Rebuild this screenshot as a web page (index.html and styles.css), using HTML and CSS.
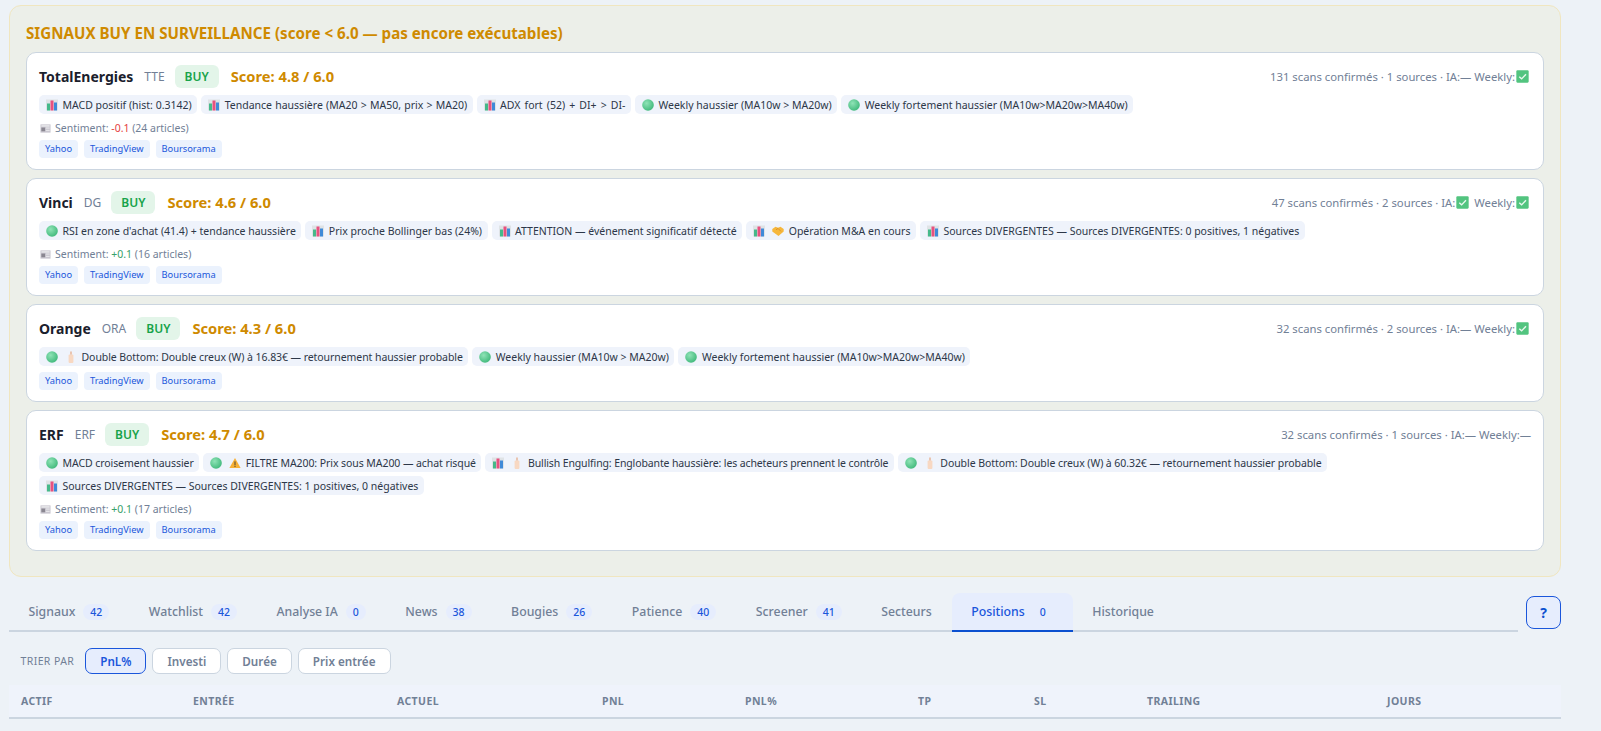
FILE: index.html
```html
<!DOCTYPE html>
<html lang="fr">
<head>
    <meta charset="UTF-8">
    <title>Positions</title>
    <link rel="stylesheet" href="styles.css">
</head>
<body>
    <svg class="sprite" width="0" height="0">
        <defs>
            <radialGradient id="ball-fill" cx="0.38" cy="0.35" r="0.7">
                <stop offset="0" stop-color="#8fe3b6"/>
                <stop offset="1" stop-color="#3fb87a"/>
            </radialGradient>
        </defs>
        <symbol id="chart" viewBox="0 0 12 12">
            <rect x="0" y="0.5" width="12" height="11" fill="#dfe3e6"/>
            <rect x="1" y="4.5" width="3" height="7" fill="#45b98a"/>
            <rect x="4.5" y="1.5" width="3" height="10" fill="#e8517f"/>
            <rect x="8" y="3.5" width="3" height="8" fill="#3f8ad8"/>
        </symbol>
        <symbol id="ball" viewBox="0 0 12 12">
            <circle cx="6" cy="6" r="5.8" fill="url(#ball-fill)"/>
        </symbol>
        <symbol id="candle" viewBox="0 0 12 12">
            <rect x="3.6" y="3.5" width="4.8" height="8.5" rx="1" fill="#f8d8c2"/>
            <rect x="5.4" y="0.5" width="1.2" height="3" fill="#e5a67e"/>
        </symbol>
        <symbol id="warn" viewBox="0 0 12 12">
            <path d="M6 1 11.6 11H.4z" fill="#f7b035"/>
            <rect x="5.4" y="4.4" width="1.2" height="3.8" fill="#6b5630"/>
            <rect x="5.4" y="8.8" width="1.2" height="1.2" fill="#6b5630"/>
        </symbol>
        <symbol id="news" viewBox="0 0 12 12">
            <rect x="0.5" y="1.5" width="11" height="9" fill="#c9c6cf"/>
            <rect x="1.5" y="2.5" width="9" height="1.4" fill="#eeeef0"/>
            <rect x="1.5" y="5" width="4" height="4" fill="#8a8791"/>
            <rect x="6.5" y="5" width="4" height="1" fill="#eeeef0"/>
            <rect x="6.5" y="7.5" width="4" height="1" fill="#eeeef0"/>
        </symbol>
        <symbol id="check" viewBox="0 0 12 12">
            <rect x="0.3" y="0.3" width="11.4" height="11.4" rx="1" fill="#52c47f"/>
            <path d="M3 6.2 5.2 8.2 9.2 4" fill="none" stroke="#e8f8ee" stroke-width="1.3"/>
        </symbol>
        <symbol id="hands" viewBox="0 0 12 12">
            <path d="M.3 4 3.5 1.8 6 2.8 8.5 1.8 11.7 4V6.5L6.5 11 .3 6.5z" fill="#f6b73c"/>
            <path d="M4 4.8 6 3.4 9 6.4" fill="none" stroke="#d8902a" stroke-width="0.9"/>
        </symbol>
    </svg>

    <section class="watch-panel">
        <h2 class="watch-title">SIGNAUX BUY EN SURVEILLANCE (score &lt; 6.0 — pas encore exécutables)</h2>

        <article class="card">
            <div class="card-head">
                <span class="name">TotalEnergies</span>
                <span class="ticker">TTE</span>
                <span class="buy">BUY</span>
                <span class="score">Score: 4.8 / 6.0</span>
                <span class="meta">131 scans confirmés · 1 sources · IA:— Weekly:<svg class="ico"><use href="#check"/></svg></span>
            </div>
            <div class="chips">
                <span class="chip"><svg class="ico"><use href="#chart"/></svg>MACD positif (hist: 0.3142)</span>
                <span class="chip spaced"><svg class="ico"><use href="#chart"/></svg>Tendance haussière (MA20 &gt; MA50, prix &gt; MA20)</span>
                <span class="chip spaced-wide"><svg class="ico"><use href="#chart"/></svg>ADX fort (52) + DI+ &gt; DI-</span>
                <span class="chip"><svg class="ico"><use href="#ball"/></svg>Weekly haussier (MA10w &gt; MA20w)</span>
                <span class="chip"><svg class="ico"><use href="#ball"/></svg>Weekly fortement haussier (MA10w&gt;MA20w&gt;MA40w)</span>
            </div>
            <div class="sentiment"><svg class="ico"><use href="#news"/></svg>Sentiment: <span class="neg">-0.1</span> (24 articles)</div>
            <div class="sources"><span class="src">Yahoo</span><span class="src">TradingView</span><span class="src">Boursorama</span></div>
        </article>

        <article class="card">
            <div class="card-head">
                <span class="name">Vinci</span>
                <span class="ticker">DG</span>
                <span class="buy">BUY</span>
                <span class="score">Score: 4.6 / 6.0</span>
                <span class="meta">47 scans confirmés · 2 sources · IA:<svg class="ico ico-gap"><use href="#check"/></svg> Weekly:<svg class="ico"><use href="#check"/></svg></span>
            </div>
            <div class="chips">
                <span class="chip"><svg class="ico"><use href="#ball"/></svg>RSI en zone d'achat (41.4) + tendance haussière</span>
                <span class="chip"><svg class="ico"><use href="#chart"/></svg>Prix proche Bollinger bas (24%)</span>
                <span class="chip"><svg class="ico"><use href="#chart"/></svg>ATTENTION — événement significatif détecté</span>
                <span class="chip"><svg class="ico"><use href="#chart"/></svg><svg class="ico"><use href="#hands"/></svg>Opération M&amp;A en cours</span>
                <span class="chip"><svg class="ico"><use href="#chart"/></svg>Sources DIVERGENTES — Sources DIVERGENTES: 0 positives, 1 négatives</span>
            </div>
            <div class="sentiment"><svg class="ico"><use href="#news"/></svg>Sentiment: <span class="pos">+0.1</span> (16 articles)</div>
            <div class="sources"><span class="src">Yahoo</span><span class="src">TradingView</span><span class="src">Boursorama</span></div>
        </article>

        <article class="card">
            <div class="card-head">
                <span class="name">Orange</span>
                <span class="ticker">ORA</span>
                <span class="buy">BUY</span>
                <span class="score">Score: 4.3 / 6.0</span>
                <span class="meta">32 scans confirmés · 2 sources · IA:— Weekly:<svg class="ico"><use href="#check"/></svg></span>
            </div>
            <div class="chips">
                <span class="chip tight"><svg class="ico"><use href="#ball"/></svg><svg class="ico"><use href="#candle"/></svg>Double Bottom: Double creux (W) à 16.83€ — retournement haussier probable</span>
                <span class="chip"><svg class="ico"><use href="#ball"/></svg>Weekly haussier (MA10w &gt; MA20w)</span>
                <span class="chip"><svg class="ico"><use href="#ball"/></svg>Weekly fortement haussier (MA10w&gt;MA20w&gt;MA40w)</span>
            </div>
            <div class="sources"><span class="src">Yahoo</span><span class="src">TradingView</span><span class="src">Boursorama</span></div>
        </article>

        <article class="card">
            <div class="card-head">
                <span class="name">ERF</span>
                <span class="ticker">ERF</span>
                <span class="buy">BUY</span>
                <span class="score">Score: 4.7 / 6.0</span>
                <span class="meta">32 scans confirmés · 1 sources · IA:— Weekly:—</span>
            </div>
            <div class="chips">
                <span class="chip tight"><svg class="ico"><use href="#ball"/></svg>MACD croisement haussier</span>
                <span class="chip tight"><svg class="ico"><use href="#ball"/></svg><svg class="ico"><use href="#warn"/></svg>FILTRE MA200: Prix sous MA200 — achat risqué</span>
                <span class="chip tighter"><svg class="ico"><use href="#chart"/></svg><svg class="ico"><use href="#candle"/></svg>Bullish Engulfing: Englobante haussière: les acheteurs prennent le contrôle</span>
                <span class="chip tight"><svg class="ico"><use href="#ball"/></svg><svg class="ico"><use href="#candle"/></svg>Double Bottom: Double creux (W) à 60.32€ — retournement haussier probable</span>
                <span class="chip"><svg class="ico"><use href="#chart"/></svg>Sources DIVERGENTES — Sources DIVERGENTES: 1 positives, 0 négatives</span>
            </div>
            <div class="sentiment"><svg class="ico"><use href="#news"/></svg>Sentiment: <span class="pos">+0.1</span> (17 articles)</div>
            <div class="sources"><span class="src">Yahoo</span><span class="src">TradingView</span><span class="src">Boursorama</span></div>
        </article>
    </section>

    <div class="tabbar">
        <nav class="tabs">
            <a class="tab">Signaux <span class="count">42</span></a>
            <a class="tab">Watchlist <span class="count">42</span></a>
            <a class="tab">Analyse IA <span class="count">0</span></a>
            <a class="tab">News <span class="count">38</span></a>
            <a class="tab">Bougies <span class="count">26</span></a>
            <a class="tab">Patience <span class="count">40</span></a>
            <a class="tab">Screener <span class="count">41</span></a>
            <a class="tab">Secteurs</a>
            <a class="tab active">Positions <span class="count">0</span></a>
            <a class="tab">Historique</a>
        </nav>
        <button class="help">?</button>
    </div>

    <div class="sortbar">
        <span class="sort-label">TRIER PAR</span>
        <button class="sort active">PnL%</button>
        <button class="sort">Investi</button>
        <button class="sort">Durée</button>
        <button class="sort">Prix entrée</button>
    </div>

    <div class="table-head">
        <span>ACTIF</span>
        <span>ENTRÉE</span>
        <span>ACTUEL</span>
        <span>PNL</span>
        <span>PNL%</span>
        <span>TP</span>
        <span>SL</span>
        <span>TRAILING</span>
        <span>JOURS</span>
    </div>
</body>
</html>
```

FILE: styles.css
```css
* {
    box-sizing: border-box;
}
body {
    margin: 0;
    padding: 5px 40px 0 9px;
    background: #edf2f7;
    font-family: "Noto Sans", sans-serif;
    color: #1a202c;
    height: 731px;
    overflow: hidden;
}
.sprite {
    position: absolute;
}
.ico {
    width: 12px;
    height: 12px;
    flex: none;
    vertical-align: -2px;
}
.ico-gap {
    margin-right: 4px;
}
.watch-panel {
    background: #ecefe9;
    border: 1px solid #f0e6c0;
    border-radius: 12px;
    padding: 17px 16px 24px;
    height: 572px;
}
.watch-title {
    margin: 0 0 9px;
    font-size: 15.15px;
    line-height: 20px;
    font-weight: 700;
    color: #cf8a00;
}
.card {
    background: #fff;
    border: 1px solid #cbd5e0;
    border-radius: 10px;
    padding: 11px 12px 11px;
    margin-bottom: 8px;
}
.card-head {
    display: flex;
    align-items: center;
    gap: 10px;
    height: 24px;
    margin-bottom: 7px;
}
.name {
    font-size: 14px;
    font-weight: 700;
    margin-right: 1px;
}
.ticker {
    font-size: 12px;
    color: #718096;
}
.buy {
    background: #e3f5e9;
    color: #17a34a;
    font-size: 12px;
    font-weight: 600;
    padding: 3px 10px;
    border-radius: 6px;
}
.score {
    font-size: 14.7px;
    font-weight: 700;
    color: #cf8a00;
    margin-left: 2px;
}
.meta {
    margin-left: auto;
    font-size: 11.3px;
    color: #718096;
}
.meta .ico {
    width: 13px;
    height: 13px;
    margin-left: 1px;
    margin-right: 2px;
}
.chips {
    display: flex;
    flex-wrap: wrap;
    gap: 4px;
}
.chip {
    display: inline-flex;
    align-items: center;
    gap: 4px;
    height: 19px;
    padding: 0 5.5px 0 7px;
    background: #eff3fb;
    border-radius: 5px;
    font-size: 10.5px;
    color: #2d3748;
}
.chip .ico:last-of-type {
    margin-right: 0.5px;
}
.chip .ico + .ico {
    margin-left: 3px;
}
.chip.spaced {
    word-spacing: 0.5px;
}
.chip.spaced-wide {
    word-spacing: 1.4px;
}
.chip.tight {
    letter-spacing: -0.07px;
}
.chip.tighter {
    letter-spacing: -0.12px;
}
.sentiment {
    font-size: 10.5px;
    line-height: 14px;
    margin-top: 7px;
    color: #718096;
}
.sentiment .ico {
    margin: 0 4px 0 1px;
    width: 11px;
    height: 11px;
}
.neg {
    color: #e53e3e;
}
.pos {
    color: #38a169;
}
.sources {
    display: flex;
    gap: 6px;
    margin-top: 5px;
}
.chips + .sources {
    margin-top: 6px;
}
.src {
    background: #ebf2fd;
    color: #1a56db;
    font-size: 9.3px;
    line-height: 18px;
    padding: 0 6px;
    border-radius: 4px;
}
.tabbar {
    display: flex;
    align-items: center;
    gap: 7px;
    margin-top: 16px;
}
.tabs {
    flex: 1;
    display: flex;
    height: 39px;
    border-bottom: 2px solid #cbd5e0;
}
.tab {
    display: flex;
    align-items: center;
    gap: 8px;
    padding: 0 20px 0 19.5px;
    font-size: 12.3px;
    font-weight: 500;
    color: #718096;
    margin-bottom: -2px;
    border-bottom: 2px solid transparent;
}
.tab.active {
    color: #1a56db;
    background: #e6edfd;
    border-bottom-color: #0b50d0;
    border-radius: 8px 8px 0 0;
}
.count {
    font-size: 10.5px;
    color: #1a56db;
    background: #e6edfd;
    padding: 1px 7px;
    border-radius: 9px;
}
.help {
    width: 35px;
    height: 33px;
    background: #e6edfd;
    border: 1px solid #1a56db;
    border-radius: 8px;
    color: #0b50d0;
    font-family: inherit;
    font-weight: 700;
    font-size: 14px;
    padding: 0;
    margin-left: 1px;
}
.sortbar {
    display: flex;
    align-items: center;
    gap: 6px;
    margin-top: 16px;
    padding-left: 11.5px;
    height: 26px;
}
.sort-label {
    font-size: 10.5px;
    color: #718096;
    letter-spacing: 0.4px;
    margin-right: 5px;
}
.sort {
    height: 26px;
    padding: 0 14px;
    background: #fff;
    border: 1px solid #cbd5e0;
    border-radius: 7px;
    font-family: inherit;
    font-size: 11.7px;
    font-weight: 600;
    color: #718096;
}
.sort.active {
    background: #e6edfd;
    border-color: #1a56db;
    color: #1a56db;
}
.table-head {
    display: grid;
    grid-template-columns: 172px 204px 205px 143px 173px 116px 113px 240px 1fr;
    align-items: center;
    height: 34px;
    margin-top: 11px;
    padding-left: 12px;
    background: #eff3fb;
    border-bottom: 2px solid #cbd5e0;
    font-size: 10.5px;
    font-weight: 700;
    color: #718096;
    letter-spacing: 0.4px;
}
```
